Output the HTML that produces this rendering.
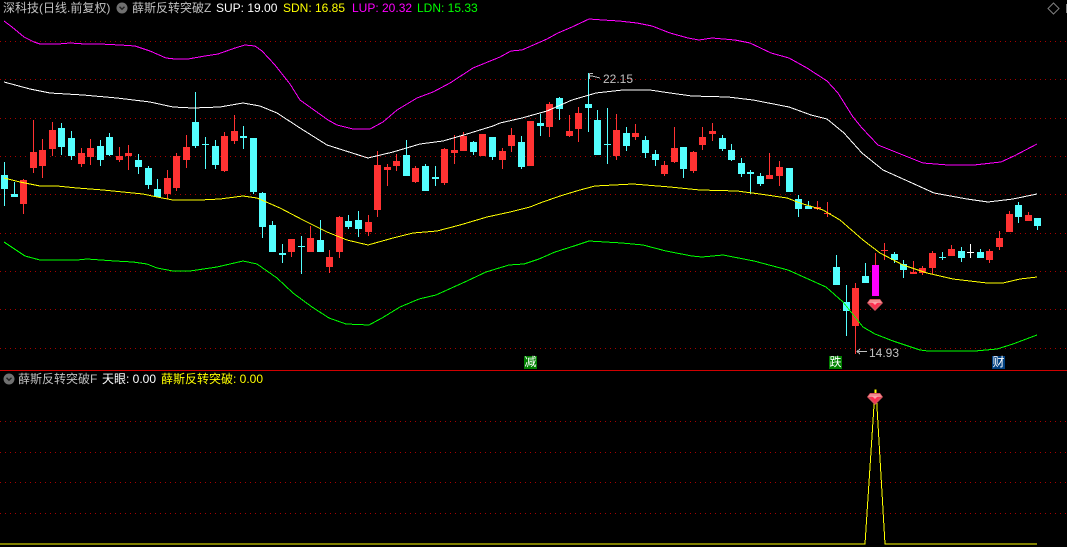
<!DOCTYPE html>
<html lang="zh"><head><meta charset="utf-8"><title>深科技</title>
<style>
html,body{margin:0;padding:0;background:#000;width:1067px;height:547px;overflow:hidden}
#w{position:relative;width:1067px;height:547px;background:#000;overflow:hidden;font:12px/14px "Liberation Sans","WenQuanYi Zen Hei","Noto Sans CJK SC",sans-serif;color:#c0c0c0}
svg{position:absolute;left:0;top:0}
span{position:absolute;white-space:pre}
.m{width:13px;height:13px;line-height:13px;text-align:center;color:#fff;top:356px}
</style></head><body><div id="w">
<svg width="1067" height="547" viewBox="0 0 1067 547" fill="none" shape-rendering="crispEdges">
<path d="M0 41.5H1067M0 79.5H1067M0 118.5H1067M0 156.5H1067M0 194.5H1067M0 233.5H1067M0 271.5H1067M0 309.5H1067M0 348.5H1067M0 421.5H1067M0 452.5H1067M0 482.5H1067M0 513.5H1067" stroke="#a80000" stroke-dasharray="1 4"/>
<path d="M0 370.5H1067" stroke="#d00000"/>
<path stroke="#ff3232" d="M23.5 179V214M33.5 120V173M42.5 139V178M52.5 122V156M81.5 148V167M90.5 139V165M119.5 147V162M128.5 145V170M167.5 170V199M176.5 153V191M186.5 135V168M224.5 132V172M234.5 115V144M291.5 239V257M310.5 226V252M329.5 250V273M339.5 216V258M368.5 215V236M377.5 151V217M387.5 164V186M396.5 154V171M415.5 166V183M444.5 148V185M454.5 135V164M463.5 132V151M482.5 134V156M502.5 148V169M511.5 128V152M530.5 121V166M549.5 102V137M569.5 115V137M578.5 107V142M616.5 114V160M635.5 124V140M664.5 161V176M674.5 127V163M693.5 151V173M702.5 127V150M712.5 123V141M769.5 153V179M779.5 161V186M817.5 201V210M827.5 202V217M855.5 283V354M875.5 253V265M884.5 243V260M913.5 261V274M922.5 266V275M932.5 251V274M951.5 245V256M989.5 249V263M999.5 231V250M1009.5 211V232M1028.5 212V221"/>
<path stroke="#ff3232" stroke-width="7" d="M23.5 180V204M33.5 152V168M42.5 150V166M52.5 130V149M81.5 153V164M90.5 148V157M119.5 156V160M128.5 153V156M167.5 178V194M176.5 156V188M186.5 147V160M224.5 136V171M234.5 131V141M291.5 239V252M310.5 238V252M329.5 257V267M339.5 217V252M368.5 222V232M377.5 165V210M387.5 167V170M396.5 161V166M415.5 168V182M444.5 149V183M454.5 150V153M463.5 136V151M482.5 134V156M502.5 151V160M511.5 135V146M530.5 121V166M549.5 104V127M569.5 131V136M578.5 113V129M616.5 130V156M635.5 133V137M664.5 165V174M674.5 148V162M693.5 152V171M702.5 137V145M712.5 131V134M769.5 175V179M779.5 167V176M817.5 207V209M827.5 213V214M855.5 288V326M884.5 250V251M913.5 272V274M922.5 268V273M932.5 253V268M951.5 249V256M989.5 251V260M999.5 238V247M1009.5 214V232M1028.5 215V221"/>
<path stroke="#54ffff" d="M4.5 162V206M14.5 182V197M61.5 123V155M71.5 131V160M100.5 140V166M109.5 133V156M138.5 154V174M148.5 166V189M157.5 179V197M195.5 92V148M205.5 137V169M215.5 140V169M243.5 126V149M253.5 138V194M262.5 192V238M272.5 221V252M282.5 244V263M301.5 236V274M320.5 220V252M348.5 215V229M358.5 211V237M406.5 140V176M425.5 164V191M435.5 166V186M473.5 141V155M492.5 137V160M521.5 136V169M540.5 114V136M559.5 97V120M588.5 73V132M597.5 110V155M607.5 108V164M626.5 127V151M645.5 136V158M655.5 150V166M683.5 147V178M722.5 135V151M731.5 144V161M741.5 158V177M750.5 170V194M760.5 173V186M789.5 168V192M798.5 195V217M808.5 201V209M836.5 255V285M846.5 285V336M865.5 263V283M894.5 252V263M903.5 260V278M942.5 252V260M961.5 247V262M980.5 249V258M1018.5 202V223M1037.5 218V230"/>
<path stroke="#54ffff" stroke-width="7" d="M4.5 175V189M14.5 194V197M61.5 128V147M71.5 138V156M100.5 146V160M109.5 137V155M138.5 160V167M148.5 168V185M157.5 189V197M195.5 122V146M205.5 144V145M215.5 146V165M243.5 136V138M253.5 138V192M262.5 193V227M272.5 225V252M282.5 253V255M301.5 246V247M320.5 240V252M348.5 221V227M358.5 220V229M406.5 155V176M425.5 166V191M435.5 177V179M473.5 142V152M492.5 137V157M521.5 142V167M540.5 123V126M559.5 98V109M588.5 104V108M597.5 120V155M607.5 144V145M626.5 133V146M645.5 140V153M655.5 154V160M683.5 147V169M722.5 138V149M731.5 150V160M741.5 163V174M750.5 172V174M760.5 176V184M789.5 168V192M798.5 199V209M808.5 206V209M836.5 267V285M846.5 302V311M865.5 276V283M894.5 254V260M903.5 264V270M942.5 257V258M961.5 251V258M980.5 252V258M1018.5 205V217M1037.5 218V226"/>
<path stroke="#ff00ff" stroke-width="7" d="M875.5 265V296"/>
<path stroke="#fff" d="M970.5 244V258M967 252.5H974"/>
<polyline stroke="#ff00ff" points="4,21 12,27 24,37 34,42 40,44 58,44 70,43 85,44 100,44 120,45 135,46 150,51 166,58 175,59 188,59 205,56 218,54 235,48 245,45 255,46 262,51 275,65 290,84 300,100 328,120 337,125 353,129 370,129 383,122 397,110 417,98 433,92 450,83 473,68 500,57 511,51 522,50 547,39 558,33 572,27 589,19 603,20 619,21 637,23 652,26 670,33 688,38 699,40 712,38 735,40 750,43 771,53 789,58 807,68 827,81 838,93 853,117 862,128 878,145 898,153 923,163 948,165 974,165 1001,162 1014,156 1037,144"/>
<polyline stroke="#fff" points="4,82 30,89 50,93 83,95 117,98 150,102 173,107 193,108 220,107 243,103 260,106 277,113 300,128 327,145 368,158 393,152 420,144 443,141 467,134 493,126 500,123 522,118 547,111 572,100 596,93 623,90 650,90 670,93 692,96 728,97 753,100 789,107 811,115 827,119 844,133 862,153 883,170 912,183 934,193 967,199 988,202 1013,199 1037,194"/>
<polyline stroke="#ffff00" points="4,178 20,182 40,186 57,186 77,188 103,190 123,192 143,194 157,197 173,200 200,200 220,199 243,196 257,198 280,208 303,220 327,232 347,240 368,245 393,238 413,233 437,231 460,225 487,217 510,212 530,207 540,203 560,196 580,190 595,186 633,184 670,187 700,190 737,191 760,194 787,198 800,203 823,210 840,220 863,240 880,253 903,265 927,273 953,279 987,283 1003,283 1020,279 1037,277"/>
<polyline stroke="#00ff00" points="4,242 10,246 25,256 40,260 57,260 77,260 87,259 115,261 133,262 147,264 157,268 173,271 190,271 217,267 243,261 257,264 277,278 293,293 312,307 329,318 346,324 369,325 382,318 400,307 419,299 436,295 467,281 486,272 509,265 524,264 539,259 555,252 574,246 589,241 622,243 643,245 666,251 692,256 702,257 723,255 754,261 788,270 826,287 843,302 863,327 875,334 893,341 920,350 928,351 975,351 997,349 1013,344 1037,335"/>
<polyline stroke="#ffff00" points="0,544 865,544 875,390 876,390 885,544 1037,544"/>
<path stroke="#c0c0c0" d="M589.5 73.5H593M589.5 73.5V79M590 76H592L600 78M856.5 351.5H867M857 351.5L860 349M857 351.5L860 354"/>
<g shape-rendering="auto">
<g transform="translate(867,299)"><path d="M3 0H13L16 4L8 12L0 4Z" fill="#d8505c"/><path d="M3 1H13L15 4H1Z" fill="#f08c90"/><path d="M3 4H13L8 10Z" fill="#ff2e50"/><path d="M5 3H11L8 6Z" fill="#ffa0a8"/></g>
<g transform="translate(867,393)"><path d="M3 0H13L16 4L8 12L0 4Z" fill="#d8505c"/><path d="M3 1H13L15 4H1Z" fill="#f08c90"/><path d="M3 4H13L8 10Z" fill="#ff2e50"/><path d="M5 3H11L8 6Z" fill="#ffa0a8"/></g>
<circle cx="122" cy="8" r="5.5" fill="#707070"/><path d="M119.5 6.8L122 9.3L124.5 6.8" stroke="#222" stroke-width="1.4"/>
<circle cx="9" cy="379" r="5.5" fill="#707070"/><path d="M6.5 377.8L9 380.3L11.5 377.8" stroke="#222" stroke-width="1.4"/>
<path d="M1053.5 3L1059 8.5L1053.5 14L1048 8.5Z" stroke="#808080"/>
</g>
<path d="M1066.5 4V13" stroke="#808080"/>
</svg>
<span style="left:3px;top:1px">深科技(日线.前复权)</span>
<span style="left:132px;top:1px">薛斯反转突破Z</span>
<span style="left:216px;top:1px;color:#fff">SUP: 19.00</span>
<span style="left:283px;top:1px;color:#ffff00">SDN: 16.85</span>
<span style="left:352px;top:1px;color:#ff00ff">LUP: 20.32</span>
<span style="left:417px;top:1px;color:#00ff00">LDN: 15.33</span>
<span style="left:18px;top:372px">薛斯反转突破F</span>
<span style="left:102px;top:372px;color:#fff">天眼: 0.00</span>
<span style="left:161px;top:372px;color:#ffff00">薛斯反转突破: 0.00</span>
<span style="left:603px;top:72px">22.15</span>
<span style="left:869px;top:346px">14.93</span>
<span class="m" style="left:524px;background:#008000">减</span>
<span class="m" style="left:829px;background:#008000">跌</span>
<span class="m" style="left:992px;background:#003f7f">财</span>
</div></body></html>
